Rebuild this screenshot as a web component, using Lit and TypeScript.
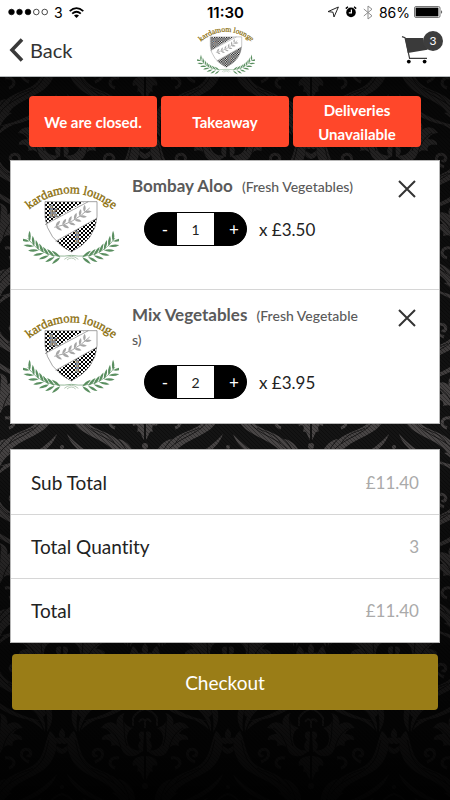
import { LitElement, html, svg, css } from "lit";
import { customElement, property, state } from "lit/decorators.js";

interface BasketItem {
  name: string;
  option: string;
  quantity: number;
  price: string;
}

interface Leaf {
  x: number;
  y: number;
  angle: number;
  length: number;
}

/** Leaves set in pairs along a quadratic stem. */
function leavesAlong(
  p0: number[],
  p1: number[],
  p2: number[],
  count: number,
  length: number,
  spread: number
): Leaf[] {
  const leaves: Leaf[] = [];
  for (let i = 0; i < count; i++) {
    const t = i / (count - 1);
    const u = 1 - t;
    const x = u * u * p0[0] + 2 * u * t * p1[0] + t * t * p2[0];
    const y = u * u * p0[1] + 2 * u * t * p1[1] + t * t * p2[1];
    const dx = 2 * u * (p1[0] - p0[0]) + 2 * t * (p2[0] - p1[0]);
    const dy = 2 * u * (p1[1] - p0[1]) + 2 * t * (p2[1] - p1[1]);
    const dir = (Math.atan2(dy, dx) * 180) / Math.PI;
    leaves.push({ x, y, angle: dir - spread, length });
    leaves.push({ x, y, angle: dir + spread, length });
  }
  return leaves;
}

const drawLeaf = (l: Leaf) => svg`<path
  transform="translate(${l.x.toFixed(1)} ${l.y.toFixed(1)}) rotate(${l.angle.toFixed(1)})"
  d="M0 0Q${l.length * 0.5} -8 ${l.length} 0Q${l.length * 0.5} 7 0 0Z" />`;

@customElement("lounge-logo")
export class LoungeLogo extends LitElement {
  static styles = css`
    :host {
      display: block;
    }
    .art {
      display: block;
      width: 100%;
      height: auto;
    }
    .name {
      font: 400 38px "Liberation Serif", serif;
      fill: #8a6d0a;
      stroke: #8a6d0a;
      stroke-width: 1px;
    }
    .initial {
      font: 700 48px "Liberation Serif", serif;
      fill: #9a9a9a;
      stroke: #777;
      stroke-width: 2px;
    }
  `;

  render() {
    const laurel = leavesAlong([112, 214], [58, 214], [20, 166], 7, 32, 38);
    const sprig = leavesAlong([98, 122], [150, 112], [184, 78], 6, 22, 42);
    const branch = svg`<g fill="#5a8f60">
      <path d="M145 208Q60 222 14 156" fill="none" stroke="#5f9465" stroke-width="2" />
      ${laurel.map(drawLeaf)}
    </g>`;
    return html`<svg class="art" viewBox="0 -12 288 252" role="img" aria-label="Kardamom Lounge">
      <defs>
        <pattern id="check" width="12" height="12" patternUnits="userSpaceOnUse">
          <rect width="12" height="12" fill="#fff" />
          <path d="M0 0H6V12H12V6H0Z" fill="#000" />
        </pattern>
        <clipPath id="shield">
          <path d="M66 47H222V92Q218 160 145 198Q72 160 66 92Z" />
        </clipPath>
        <path id="arc" d="M4 84Q70 22 145 22T286 84" />
      </defs>
      <text class="name" text-anchor="middle">
        <textPath href="#arc" startOffset="50%">kardamom lounge</textPath>
      </text>
      <g clip-path="url(#shield)">
        <rect x="60" y="40" width="170" height="165" fill="#fff" />
        <path d="M60 40H196L60 118Z" fill="url(#check)" />
        <path d="M230 92L94 170V205H230Z" fill="url(#check)" />
        <text class="initial" x="78" y="92">k</text>
        <text class="initial" x="156" y="172">l</text>
      </g>
      <path d="M66 47H222V92Q218 160 145 198Q72 160 66 92Z" fill="none" stroke="#777" stroke-width="2" />
      <path d="M66 116L196 47M98 166L221 97" stroke="#777" stroke-width="2" />
      <g fill="#a6a6a6">
        <path d="M94 124Q150 114 200 66" fill="none" stroke="#a6a6a6" stroke-width="3" />
        ${sprig.map(drawLeaf)}
      </g>
      ${branch}
      <g transform="translate(290 0) scale(-1 1)">${branch}</g>
      <path d="M124 220Q145 202 166 220M132 222Q145 210 158 222" fill="none" stroke="#8fae90" stroke-width="2" />
    </svg>`;
  }
}

@customElement("damask-backdrop")
export class DamaskBackdrop extends LitElement {
  static styles = css`
    :host {
      display: block;
      background: #141414;
    }
    .pattern {
      display: block;
      width: 100%;
      height: 100%;
    }
  `;

  render() {
    const half = svg`
      <path d="M-2 10C-20 14 -22 -8 -12 -12C-22 -14 -24 -24 -20 -27C-26 -26 -30 -20 -28 -15C-34 -20 -40 -18 -44 -12C-38 -12 -36 -9 -34 -6C-40 -6 -44 -3 -43 0C-36 -2 -32 2 -34 6C-28 4 -24 6 -22 12C-18 18 -8 18 -2 10Z" />
      <path d="M-1 -8C-6 -10 -8 -4 -4 0C-8 4 -8 10 -2 12Z" />
      <path d="M-1 16C-8 16 -14 20 -12 26C-8 24 -6 26 -8 32C-4 30 -4 36 -1 40Z" />
      <path d="M-16 58C-24 32 -44 34 -56 24C-66 16 -66 0 -71 -9C-78 -4 -80 6 -74 18C-66 36 -42 38 -32 50C-24 60 -18 66 -16 58Z" />
      <path d="M-20 66C-38 62 -60 54 -78 34C-72 52 -46 66 -20 66Z" />
      <path d="M-68 -8C-80 -24 -70 -44 -56 -46C-66 -38 -70 -24 -68 -8ZM-66 -8C-68 -24 -58 -34 -50 -32C-58 -28 -62 -20 -66 -8ZM-64 -10C-62 -18 -56 -22 -49 -20C-54 -18 -60 -14 -64 -10Z" />
      <path d="M-26 18C-36 16 -38 26 -30 28M-50 22C-38 18 -42 6 -50 10C-54 14 -50 18 -48 15" fill="none" stroke="#494646" stroke-width="3" />
      <path d="M-20 54C-30 38 -52 36 -62 22C-68 14 -68 4 -70 0M-30 44C-36 32 -48 32 -54 28M-38 -12C-30 -8 -26 0 -24 8M-22 -22C-20 -14 -22 -4 -18 6" fill="none" stroke="#1b1a1a" />`;
    const motif = svg`
      ${half}
      <g transform="scale(-1 1)">${half}</g>
      <path d="M-12 -14V-22Q-8 -29 0 -31Q8 -29 12 -22V-14M0 -12V-20M-6 -18Q-3 -23 0 -19Q3 -23 6 -18" fill="none" stroke="#494646" stroke-width="2" />
      <circle cy="46" r="3" />
      <circle cy="-38" r="2" />`;
    const bud = svg`
      <path d="M0 -12Q5 -6 2 -2Q8 -4 8 1Q3 6 0 3Q-3 6 -8 1Q-8 -4 -2 -2Q-5 -6 0 -12ZM0 14Q-8 12 -5 6L0 9L5 6Q8 12 0 14Z" />`;
    const spots = [
      [0, 0],
      [166, 0],
      [0, 170],
      [166, 170],
      [83, 85],
      [83, -85],
      [83, 255],
    ];
    return html`<svg class="pattern" aria-hidden="true">
      <defs>
        <pattern id="damask" x="145" y="153" width="166" height="170" patternUnits="userSpaceOnUse">
          <g fill="#494646">
            ${spots.map(([x, y]) => svg`<g transform="translate(${x} ${y})">${motif}</g>`)}
            ${[[83, 0], [0, 85], [166, 85], [83, 170]].map(
              ([x, y]) => svg`<g transform="translate(${x} ${y})">${bud}</g>`
            )}
          </g>
        </pattern>
        <pattern id="weave" width="4" height="4" patternUnits="userSpaceOnUse">
          <path d="M0 0L4 4" stroke="#000" stroke-opacity=".35" />
        </pattern>
        <linearGradient id="shade" x2="0" y2="1">
          <stop offset="0" stop-opacity=".75" />
          <stop offset=".12" stop-opacity=".5" />
          <stop offset=".38" stop-opacity=".15" />
          <stop offset=".5" stop-opacity="0" />
          <stop offset=".65" stop-opacity=".45" />
          <stop offset=".8" stop-opacity=".7" />
          <stop offset=".9" stop-opacity=".82" />
          <stop offset="1" stop-opacity=".95" />
        </linearGradient>
      </defs>
      <rect width="100%" height="100%" fill="url(#damask)" />
      <rect width="100%" height="100%" fill="url(#weave)" />
      <rect width="100%" height="100%" fill="url(#shade)" />
    </svg>`;
  }
}

@customElement("basket-row")
export class BasketRow extends LitElement {
  @property({ attribute: false }) item!: BasketItem;

  static styles = css`
    :host {
      display: flex;
      box-sizing: border-box;
      min-height: 128px;
      padding: 13px 10px 20px 12px;
    }
    .logo {
      flex: none;
      width: 96px;
      margin-top: 8px;
    }
    .details {
      flex: 1;
      min-width: 0;
      margin: 0 24px 4px 13px;
    }
    .title {
      margin: 0 0 14px;
      font-size: 17px;
      font-weight: 700;
      line-height: 24px;
      color: #5a5a5a;
      word-break: break-all;
    }
    .option {
      margin-left: 5px;
      font-size: 14px;
      font-weight: 500;
      line-height: 16px;
    }
    .order {
      display: flex;
      align-items: center;
      gap: 12px;
      margin-left: 12px;
    }
    .stepper {
      display: flex;
      box-sizing: border-box;
      width: 103px;
      height: 34px;
      border: 1px solid #000;
      border-radius: 17px;
      overflow: hidden;
      background: #000;
    }
    .step {
      flex: 1;
      border: 0;
      padding: 0 0 0 8px;
      background: #000;
      color: #fff;
      font: 400 17px Lato, sans-serif;
    }
    .count {
      box-sizing: border-box;
      width: 37px;
      border: 0;
      padding: 0;
      background: #fff;
      color: #222;
      font: 400 14px Lato, sans-serif;
      text-align: center;
    }
    .price {
      font-size: 17px;
      color: #222;
    }
    .remove {
      flex: none;
      width: 44px;
      height: 30px;
      border: 0;
      padding: 0;
      background: none;
    }
    .cross {
      display: block;
      width: 18px;
      height: 18px;
      margin: 0 auto;
    }
  `;

  private change(step: number) {
    this.item = { ...this.item, quantity: Math.max(0, this.item.quantity + step) };
  }

  render() {
    const { name, option, quantity, price } = this.item;
    return html`
      <lounge-logo class="logo"></lounge-logo>
      <div class="details">
        <h2 class="title">${name} <span class="option">(${option})</span></h2>
        <div class="order">
          <div class="stepper">
            <button class="step" aria-label="One fewer" @click=${() => this.change(-1)}>-</button>
            <input class="count" type="text" inputmode="numeric" aria-label="Quantity of ${name}" .value=${String(quantity)} />
            <button class="step" aria-label="One more" @click=${() => this.change(1)}>+</button>
          </div>
          <span class="price">x ${price}</span>
        </div>
      </div>
      <button class="remove" aria-label="Remove ${name}">
        <svg class="cross" viewBox="0 0 18 18"><path d="M1 1L17 17M17 1L1 17" stroke="#333" stroke-width="2" /></svg>
      </button>
    `;
  }
}

@customElement("app-root")
export class AppRoot extends LitElement {
  @state() private items: BasketItem[] = [
    { name: "Bombay Aloo", option: "Fresh Vegetables", quantity: 1, price: "£3.50" },
    { name: "Mix Vegetables", option: "Fresh Vegetables", quantity: 2, price: "£3.95" },
  ];

  private notices = ["We are closed.", "Takeaway", "Deliveries Unavailable"];

  private totals = [
    ["Sub Total", "£11.40"],
    ["Total Quantity", "3"],
    ["Total", "£11.40"],
  ];

  static styles = css`
    :host {
      display: flex;
      flex-direction: column;
      min-height: 100vh;
      font-family: Lato, sans-serif;
      font-variant-ligatures: none;
      color: #222;
    }
    .top {
      background: #fff;
      border-bottom: 1px solid #b5b9bb;
    }
    .status {
      display: grid;
      grid-template-columns: 1fr auto 1fr;
      align-items: center;
      height: 24px;
      padding: 0 7px 0 8px;
      font: 400 14px Inter, sans-serif;
      color: #000;
    }
    .signal,
    .device {
      display: flex;
      align-items: center;
      gap: 6px;
    }
    .device {
      justify-content: flex-end;
    }
    .icon {
      display: block;
      flex: none;
    }
    .charge {
      display: flex;
      align-items: center;
      gap: 4px;
    }
    .clock {
      font-weight: 600;
      font-size: 15px;
    }
    .nav {
      display: grid;
      grid-template-columns: 1fr 58px 1fr;
      align-items: center;
      height: 52px;
      padding: 0 7px 0 9px;
    }
    .back {
      display: flex;
      align-items: center;
      gap: 6px;
      justify-self: start;
      color: #333;
      font-size: 20px;
      text-decoration: none;
    }
    .cart {
      position: relative;
      justify-self: end;
      width: 42px;
      height: 38px;
      border: 0;
      padding: 0;
      background: none;
    }
    .badge {
      position: absolute;
      top: 0;
      right: 0;
      width: 20px;
      height: 20px;
      border-radius: 50%;
      background: #3d3d3d;
      color: #fff;
      font: 400 12px/20px Lato, sans-serif;
      text-align: center;
    }
    .page {
      position: relative;
      flex: 1;
      isolation: isolate;
      padding: 19px 10px 24px;
    }
    .backdrop {
      position: absolute;
      inset: 0;
      z-index: -1;
    }
    .notices {
      display: grid;
      grid-template-columns: repeat(3, 1fr);
      gap: 4px;
      margin: 0 19px 13px;
      padding: 0;
      list-style: none;
    }
    .notice {
      display: flex;
      align-items: center;
      justify-content: center;
      min-height: 51px;
      padding: 0 12px;
      border-radius: 4px;
      background: #ff472a;
      color: #fff;
      font-size: 15px;
      font-weight: 700;
      line-height: 24px;
      text-align: center;
    }
    .card {
      margin: 0 0 25px;
      border: 1px solid #b8b8b8;
      background: #fff;
    }
    .line + .line {
      border-top: 1px solid #d6d6d6;
    }
    .totals {
      margin-bottom: 11px;
    }
    .total {
      display: flex;
      align-items: center;
      justify-content: space-between;
      box-sizing: border-box;
      height: 64px;
      padding: 0 20px;
      font-size: 19px;
    }
    .value {
      margin: 0;
      color: #aaa;
      font-size: 17px;
    }
    .checkout {
      display: block;
      width: calc(100% - 4px);
      height: 56px;
      margin: 0 2px;
      border: 0;
      border-radius: 4px;
      background: #9a7d17;
      color: #fff;
      font: 400 19px Lato, sans-serif;
    }
  `;

  render() {
    return html`
      <header class="top">
        <div class="status">
          <div class="signal">
            <svg class="icon" width="40" height="8" viewBox="0 0 40 8">
              <g stroke="#000" stroke-width=".7">
                <circle cx="3.5" cy="4" r="2.8" /><circle cx="11.5" cy="4" r="2.8" /><circle cx="20" cy="4" r="2.8" />
                <circle cx="28.3" cy="4" r="2.8" fill="none" /><circle cx="36.7" cy="4" r="2.8" fill="none" />
              </g>
            </svg>
            <span>3</span>
            <svg class="icon" width="15" height="11" viewBox="0 0 15 11">
              <g fill="none" stroke="#000" stroke-width="1.8">
                <path d="M.7 4.2Q7.5 -2 14.3 4.2" /><path d="M3.2 6.7Q7.5 2.8 11.8 6.7" />
              </g>
              <path d="M5 8.4Q7.5 6.4 10 8.4L7.5 11Z" />
            </svg>
          </div>
          <time class="clock">11:30</time>
          <div class="device">
            <svg class="icon" width="12" height="12" viewBox="0 0 12 12">
              <path d="M11.4 1L1 5.6L6 6.2L7 11Z" fill="none" stroke="#222" stroke-linejoin="round" />
            </svg>
            <svg class="icon" width="12" height="12" viewBox="0 0 12 12">
              <circle cx="6" cy="6.4" r="4.8" /><path d="M.8 2.6L3 .8M11.2 2.6L9 .8" stroke="#000" stroke-width="1.4" />
              <path d="M6.4 3.6V6.8H3.8" fill="none" stroke="#fff" stroke-width="1.2" />
            </svg>
            <svg class="icon" width="10" height="15" viewBox="0 0 10 15">
              <path d="M.8 4L9 10.8L5 14V1L9 4.2L.8 11" fill="none" stroke="#8d8d8d" />
            </svg>
            <span class="charge">
              <span>86%</span>
              <svg class="icon" width="29" height="12" viewBox="0 0 29 12">
                <rect x=".5" y=".5" width="25.5" height="11" rx="1.5" fill="none" stroke="#777" />
                <rect x="1.6" y="1.6" width="22.8" height="8.8" /><path d="M27.4 4Q29 6 27.4 8Z" />
              </svg>
            </span>
          </div>
        </div>
        <nav class="nav">
          <a class="back" href="#menu">
            <svg class="icon" width="15" height="24" viewBox="0 0 15 24">
              <path d="M13 1.5L3 12L13 22.5" fill="none" stroke="#3a3a3a" stroke-width="3.6" />
            </svg>
            Back
          </a>
          <lounge-logo></lounge-logo>
          <button class="cart" aria-label="Basket, 3 items">
            <svg class="icon" width="42" height="38" viewBox="0 0 42 38">
              <path d="M1 5.6L4 6.6L8.6 27.4H26" fill="none" stroke="#3a3a3a" stroke-width="1.2" />
              <path d="M4 7H22.4Q22 13.4 27 17.4L26.4 18.8L6.8 22Z" fill="#3a3a3a" />
              <circle cx="7.8" cy="30.6" r="1.9" /><circle cx="23.6" cy="30.6" r="1.9" />
            </svg>
            <span class="badge">3</span>
          </button>
        </nav>
      </header>
      <main class="page">
        <damask-backdrop class="backdrop"></damask-backdrop>
        <ul class="notices">
          ${this.notices.map((text) => html`<li class="notice">${text}</li>`)}
        </ul>
        <section class="card" aria-label="Basket">
          ${this.items.map((item) => html`<basket-row class="line" .item=${item}></basket-row>`)}
        </section>
        <dl class="card totals">
          ${this.totals.map(
            ([label, value]) => html`<div class="line total">
              <dt>${label}</dt>
              <dd class="value">${value}</dd>
            </div>`
          )}
        </dl>
        <button class="checkout">Checkout</button>
      </main>
    `;
  }
}
